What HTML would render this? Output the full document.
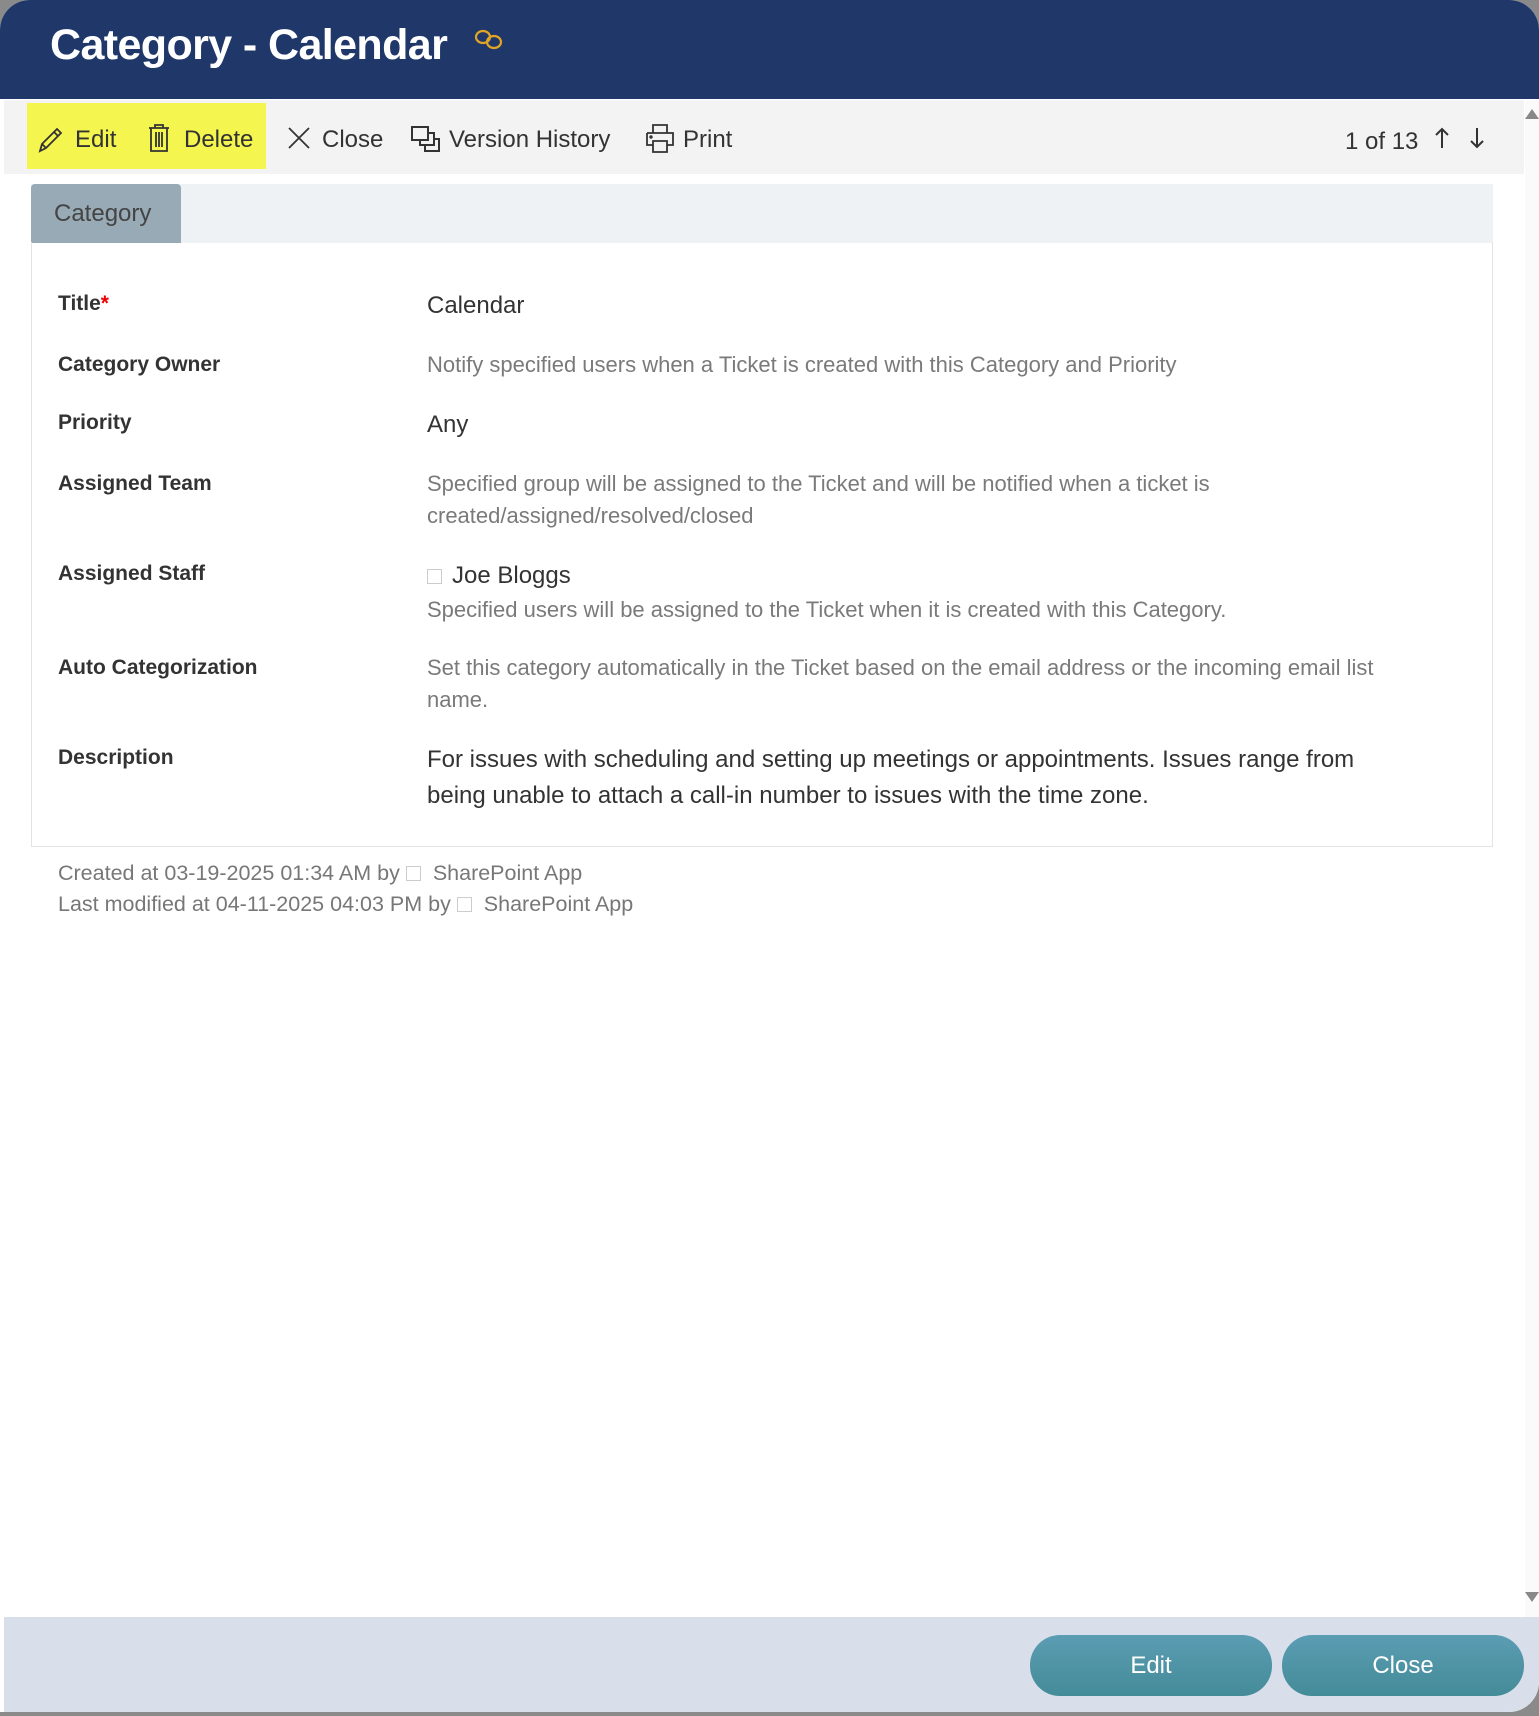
<!DOCTYPE html>
<html><head><meta charset="utf-8"><style>
*{margin:0;padding:0;box-sizing:border-box}
body{width:1539px;height:1716px;background:#8a8a8a;font-family:"Liberation Sans",sans-serif;position:relative;overflow:hidden}
.win{position:absolute;left:0;top:0;width:1539px;height:1712px;background:#fff;border-radius:30px 30px 30px 0;overflow:hidden}
.hdr{position:absolute;left:0;top:0;width:1539px;height:99px;background:#203769}
.hdr h1{position:absolute;left:50px;top:21px;font-size:43px;color:#fff;font-weight:bold;letter-spacing:-0.6px}
.tb{position:absolute;left:4px;top:100px;width:1520px;height:74px;background:#f3f3f3}
.yl{position:absolute;left:27px;top:103px;width:239px;height:66px;background:#f5f54f}
.t{position:absolute;font-size:24px;color:#333;white-space:nowrap}
.ic{position:absolute}
.tabbar{position:absolute;left:31px;top:184px;width:1462px;height:59px;background:#eef2f5}
.tab{position:absolute;left:31px;top:184px;width:150px;height:59px;background:#97aab5;border-radius:4px 4px 0 0;color:#444;font-size:24px;padding:16px 0 0 23px}
.box{position:absolute;left:31px;top:242px;width:1462px;height:605px;border:1px solid #e3e3e3;border-top:none}
.lb{position:absolute;left:58px;font-size:21px;font-weight:bold;color:#333;white-space:nowrap}
.v{position:absolute;left:427px;font-size:22px;color:#7a7a7a;line-height:32px;white-space:nowrap}
.vd{position:absolute;left:427px;font-size:24px;color:#333;line-height:36px;white-space:nowrap}
.cb{display:inline-block;width:15px;height:15px;border:1px solid #ccc;vertical-align:-1px;margin-right:10px}
.meta{position:absolute;left:58px;font-size:21.5px;color:#777;white-space:nowrap}
.ft{position:absolute;left:4px;top:1617px;width:1535px;height:95px;background:#d9dfea;border-radius:0 0 30px 0}
.btn{position:absolute;top:1635px;width:242px;height:61px;border-radius:30px;background:linear-gradient(#5b9db3,#448b98);color:#fff;font-size:24px;text-align:center;line-height:61px}
.sb{position:absolute;left:1525px;top:100px;width:14px;height:1517px;background:#fafafa}
</style></head><body>
<div class="win">
<div class="hdr"><h1>Category - Calendar</h1>
<svg class="ic" style="left:473px;top:28px" width="32" height="24" viewBox="0 0 32 24" fill="none" stroke="#e0a526" stroke-width="2.2"><ellipse cx="10" cy="9" rx="7" ry="6"/><ellipse cx="21" cy="14" rx="7" ry="6"/></svg>
</div>
<div class="tb"></div>
<div class="yl"></div>
<svg class="ic" style="left:36px;top:124px" width="30" height="30" viewBox="0 0 30 30" fill="none" stroke="#333" stroke-width="1.8"><path d="M4 27l2-7L21 5l4 4L10 24z M18 8l4 4 M6 20l4 4"/></svg>
<div class="t" style="left:75px;top:126px">Edit</div>
<svg class="ic" style="left:146px;top:122px" width="26" height="32" viewBox="0 0 26 32" fill="none" stroke="#333" stroke-width="1.8"><path d="M3 6h20 M9 6V3h8v3 M5 6v23h16V6 M10 10v15 M13 10v15 M16 10v15"/></svg>
<div class="t" style="left:184px;top:126px">Delete</div>
<svg class="ic" style="left:287px;top:126px" width="24" height="24" viewBox="0 0 24 24" stroke="#333" stroke-width="1.8"><path d="M2 2l20 20M22 2L2 22"/></svg>
<div class="t" style="left:322px;top:126px">Close</div>
<svg class="ic" style="left:410px;top:125px" width="32" height="28" viewBox="0 0 32 28" fill="none" stroke="#333" stroke-width="2"><rect x="2" y="2" width="16" height="13"/><path d="M18 8h6v12H10v-5 M24 14h5v12H15v-6"/></svg>
<div class="t" style="left:449px;top:126px">Version History</div>
<svg class="ic" style="left:645px;top:122px" width="30" height="32" viewBox="0 0 30 32" fill="none" stroke="#333" stroke-width="1.8"><path d="M8 11V3h14v8 M2 11h26v12h-6 M8 23H2V11 M8 19h14v11H8z"/><circle cx="6" cy="15" r="0.8" fill="#333"/></svg>
<div class="t" style="left:683px;top:126px">Print</div>
<div class="t" style="left:1345px;top:128px">1 of 13</div>
<svg class="ic" style="left:1434px;top:126px" width="16" height="24" viewBox="0 0 16 24" fill="none" stroke="#333" stroke-width="2"><path d="M8 22V3 M2 9l6-6 6 6"/></svg>
<svg class="ic" style="left:1469px;top:126px" width="16" height="24" viewBox="0 0 16 24" fill="none" stroke="#333" stroke-width="2"><path d="M8 2v19 M2 15l6 6 6-6"/></svg>
<div class="sb"></div>
<svg class="ic" style="left:1525px;top:107px" width="14" height="12"><path d="M0 12L7 2 14 12z" fill="#888"/></svg>
<svg class="ic" style="left:1525px;top:1592px" width="14" height="12"><path d="M0 0L7 10 14 0z" fill="#888"/></svg>
<div class="tabbar"></div>
<div class="tab">Category</div>
<div class="box"></div>
<div class="lb" style="top:292px">Title<span style="color:#e00">*</span></div>
<div class="vd" style="top:288px">Calendar</div>
<div class="lb" style="top:353px">Category Owner</div>
<div class="v" style="top:349px">Notify specified users when a Ticket is created with this Category and Priority</div>
<div class="lb" style="top:411px">Priority</div>
<div class="vd" style="top:407px">Any</div>
<div class="lb" style="top:472px">Assigned Team</div>
<div class="v" style="top:468px">Specified group will be assigned to the Ticket and will be notified when a ticket is<br>created/assigned/resolved/closed</div>
<div class="lb" style="top:562px">Assigned Staff</div>
<div class="vd" style="top:558px"><span class="cb"></span>Joe Bloggs</div>
<div class="v" style="top:594px">Specified users will be assigned to the Ticket when it is created with this Category.</div>
<div class="lb" style="top:656px">Auto Categorization</div>
<div class="v" style="top:652px">Set this category automatically in the Ticket based on the email address or the incoming email list<br>name.</div>
<div class="lb" style="top:746px">Description</div>
<div class="vd" style="top:742px">For issues with scheduling and setting up meetings or appointments. Issues range from<br>being unable to attach a call-in number to issues with the time zone.</div>
<div class="meta" style="top:861px">Created at 03-19-2025 01:34 AM by <span class="cb" style="margin-right:12px"></span>SharePoint App</div>
<div class="meta" style="top:892px">Last modified at 04-11-2025 04:03 PM by <span class="cb" style="margin-right:12px"></span>SharePoint App</div>
<div class="ft"></div>
<div class="btn" style="left:1030px">Edit</div>
<div class="btn" style="left:1282px">Close</div>
</div>
</body></html>
